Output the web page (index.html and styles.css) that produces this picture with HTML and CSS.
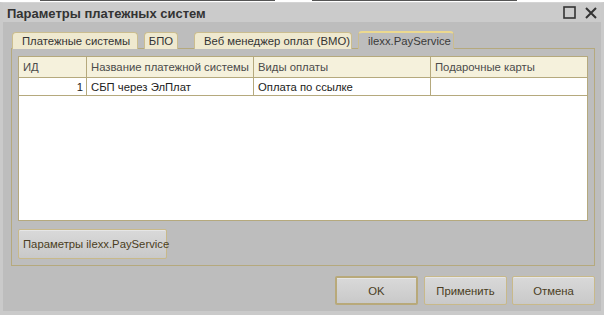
FILE: index.html
```html
<!DOCTYPE html>
<html lang="ru">
<head>
    <meta charset="UTF-8">
    <title>Параметры платежных систем</title>
    <link rel="stylesheet" href="styles.css">
</head>
<body>
    <div class="under-strip">
        <span class="scrap scrap-a"></span>
        <span class="scrap scrap-b"></span>
    </div>
    <div class="window">
        <div class="titlebar">
            <span class="title">Параметры платежных систем</span>
            <div class="title-buttons">
                <svg class="icon-max" width="13" height="13" viewBox="0 0 13 13">
                    <rect x="1" y="1" width="11" height="11" fill="none" stroke="#333" stroke-width="1.6"/>
                </svg>
                <svg class="icon-close" width="12" height="12" viewBox="0 0 12 12">
                    <path d="M1 1 L11 11 M11 1 L1 11" stroke="#333" stroke-width="2"/>
                </svg>
            </div>
        </div>
        <div class="window-body">
            <div class="tabs">
                <div class="tab tab-1">Платежные системы</div>
                <div class="tab tab-2">БПО</div>
                <div class="tab tab-3">Веб менеджер оплат (ВМО)</div>
                <div class="tab tab-4 active">ilexx.PayService</div>
            </div>
            <div class="panel">
                <div class="grid-box">
                    <table class="grid">
                        <thead>
                            <tr>
                                <th class="col-id">ИД</th>
                                <th class="col-name">Название платежной системы</th>
                                <th class="col-type">Виды оплаты</th>
                                <th class="col-gift">Подарочные карты</th>
                            </tr>
                        </thead>
                        <tbody>
                            <tr>
                                <td class="num">1</td>
                                <td>СБП через ЭлПлат</td>
                                <td>Оплата по ссылке</td>
                                <td></td>
                            </tr>
                        </tbody>
                    </table>
                </div>
                <button class="btn btn-params">Параметры ilexx.PayService</button>
            </div>
            <div class="footer">
                <button class="btn btn-footer default">OK</button>
                <button class="btn btn-footer">Применить</button>
                <button class="btn btn-footer">Отмена</button>
            </div>
        </div>
    </div>
</body>
</html>
```

FILE: styles.css
```css
body {
    margin: 0;
    font-family: "Liberation Sans", Arial, sans-serif;
    font-size: 11.3px;
    color: #333;
    background: #c9c9c9;
    width: 604px;
    height: 315px;
    overflow: hidden;
}
.under-strip {
    height: 2px;
    background: #fff;
    position: relative;
}
.scrap {
    position: absolute;
    top: 0;
    height: 1px;
    background: #555;
}
.scrap-a {
    left: 40px;
    width: 235px;
}
.scrap-b {
    left: 312px;
    width: 205px;
}
.window {
    height: 313px;
    border: 3px solid #cacaca;
    border-top: 1px solid #d4d4d4;
    border-bottom-width: 4px;
    box-sizing: border-box;
    display: flex;
    flex-direction: column;
}
.titlebar {
    height: 19px;
    background: #cbcbcb;
    display: flex;
    justify-content: space-between;
    align-items: center;
    padding: 0 4px 0 4px;
}
.title {
    font-size: 13px;
    font-weight: bold;
    color: #333;
    padding-top: 1px;
}
.title-buttons {
    display: flex;
    align-items: center;
    gap: 9px;
}
.window-body {
    flex: 1;
    background: #bdbdbd;
    padding: 10px 6px 0 8px;
    display: flex;
    flex-direction: column;
}
.tabs {
    display: flex;
    height: 16px;
    padding-left: 1px;
    position: relative;
    z-index: 1;
}
.tab {
    box-sizing: border-box;
    height: 17px;
    background: #efe9cf;
    border: 1px solid #cbbd8f;
    border-bottom: none;
    border-radius: 4px 4px 0 0;
    line-height: 16px;
    padding-left: 9px;
    color: #333;
    white-space: nowrap;
    overflow: hidden;
}
.tab-1 {
    width: 126px;
}
.tab-2 {
    width: 34px;
    margin-left: 6px;
    padding-left: 0;
    text-align: center;
}
.tab-3 {
    width: 158px;
    margin-left: 16px;
}
.tab-4 {
    width: 96px;
    margin-left: 6px;
}
.tab.active {
    background: #bdbdbd;
    border-top: 2px solid #ecd98f;
    height: 18px;
    margin-top: -1px;
    line-height: 16px;
    color: #3a3a3a;
}
.panel {
    height: 218px;
    box-sizing: border-box;
    border: 1px solid #b5a97d;
    padding: 7px 6px 6px 6px;
    display: flex;
    flex-direction: column;
    align-items: flex-start;
}
.grid-box {
    align-self: stretch;
    height: 166px;
    background: #fff;
    border: 1px solid #b5a97d;
    box-sizing: border-box;
}
.grid {
    width: 100%;
    border-collapse: collapse;
    table-layout: fixed;
}
.grid th {
    height: 20px;
    background: #f5f1dc;
    font-weight: normal;
    text-align: left;
    color: #4b4b4b;
    padding: 0 4px;
    border-right: 1px solid #b5a97d;
    border-bottom: 1px solid #b5a97d;
    white-space: nowrap;
    overflow: hidden;
}
.grid td {
    height: 17px;
    padding: 0 4px;
    color: #222;
    border-right: 1px solid #b5a97d;
    border-bottom: 1px solid #b5a97d;
    white-space: nowrap;
}
.grid th:last-child,
.grid td:last-child {
    border-right: none;
}
.grid td.num {
    text-align: right;
    padding-right: 3px;
}
.col-id {
    width: 59px;
}
.col-name {
    width: 158px;
}
.col-type {
    width: 168px;
}
.btn {
    font-family: "Liberation Sans", Arial, sans-serif;
    font-size: 11.3px;
    color: #4a3d22;
    background: linear-gradient(#d9d9d9, #c9c9c9);
    border: 1px solid #c8b98a;
    border-radius: 2px;
    box-shadow: inset 0 1px 0 #e6e6e6;
    white-space: nowrap;
    cursor: pointer;
}
.btn-params {
    margin-top: 8px;
    width: 149px;
    height: 30px;
    padding: 0 0 0 4px;
    text-align: left;
}
.footer {
    display: flex;
    justify-content: flex-end;
    gap: 5px;
    padding-top: 10px;
}
.btn-footer {
    width: 83px;
    height: 29px;
}
.btn-footer.default {
    border: 2px solid #b8a97a;
    margin-right: 1px;
}
```
